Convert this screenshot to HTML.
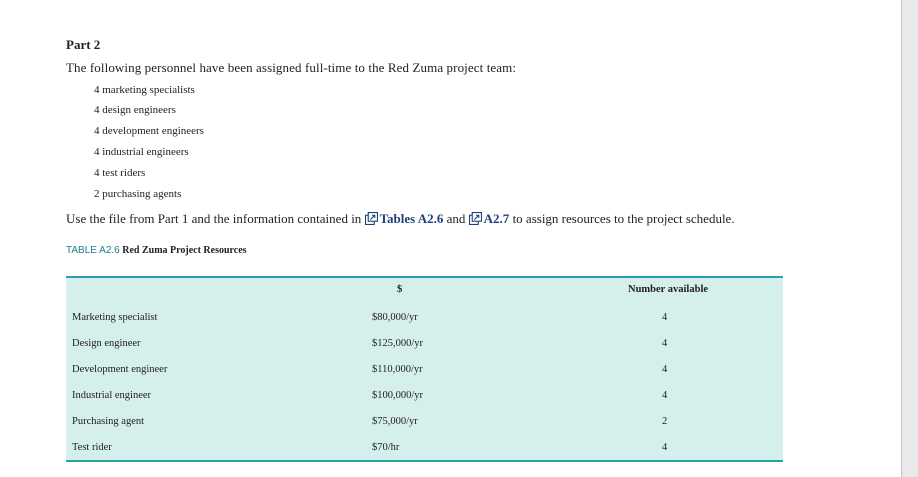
<!DOCTYPE html>
<html><head><style>
body{margin:0;width:918px;height:477px;background:#fff;position:relative;overflow:hidden;font-family:"Liberation Serif",serif;color:#222}
.a{position:absolute;white-space:nowrap;line-height:1}
.sb{position:absolute;left:901px;top:0;width:17px;height:477px;background:#e9e9e9;border-left:1px solid #c4c4c4}
.l{font-size:11px;left:94px}
.tb{position:absolute;left:66px;top:276px;width:717px;height:182px;background:#d5efec;border-top:2px solid #2aa0aa;border-bottom:2px solid #2aa0aa}
.r{font-size:10.5px}
.ic{display:inline-block;width:13px;height:13px;vertical-align:-2px;margin-right:2px}
b.k{color:#1d3f7a}
</style></head><body>
<div class="a" style="left:66px;top:38px;font-size:13px;font-weight:bold">Part 2</div>
<div class="a" style="left:66px;top:61px;font-size:13px;letter-spacing:0.1px">The following personnel have been assigned full-time to the Red Zuma project team:</div>
<div class="a l" style="top:85px">4 marketing specialists</div>
<div class="a l" style="top:105px">4 design engineers</div>
<div class="a l" style="top:126px">4 development engineers</div>
<div class="a l" style="top:147px">4 industrial engineers</div>
<div class="a l" style="top:168px">4 test riders</div>
<div class="a l" style="top:189px">2 purchasing agents</div>
<div class="a" style="left:66px;top:212px;font-size:13px">Use the file from Part 1 and the information contained in <svg class="ic" viewBox="0 0 12 12"><rect x="0.5" y="3" width="8" height="8.5" fill="none" stroke="#1d3f7a"/><rect x="3" y="0.5" width="8.5" height="8" fill="#fff" stroke="#1d3f7a"/><path d="M5 7L9 3M6.5 3H9V5.5" stroke="#1d3f7a" fill="none"/></svg><b class="k">Tables A2.6</b> and <svg class="ic" viewBox="0 0 12 12"><rect x="0.5" y="3" width="8" height="8.5" fill="none" stroke="#1d3f7a"/><rect x="3" y="0.5" width="8.5" height="8" fill="#fff" stroke="#1d3f7a"/><path d="M5 7L9 3M6.5 3H9V5.5" stroke="#1d3f7a" fill="none"/></svg><b class="k">A2.7</b> to assign resources to the project schedule.</div>
<div class="a" style="left:66px;top:246px;font-size:10px"><span style="font-family:'Liberation Sans',sans-serif;color:#1a7f8a">TABLE A2.6</span> <b>Red Zuma Project Resources</b></div>
<div class="tb"></div>
<div class="a r" style="left:397px;top:285px;font-weight:bold">$</div>
<div class="a r" style="left:628px;top:285px;font-weight:bold">Number available</div>
<div class="a r" style="left:72px;top:313px">Marketing specialist</div>
<div class="a r" style="left:72px;top:339px">Design engineer</div>
<div class="a r" style="left:72px;top:365px">Development engineer</div>
<div class="a r" style="left:72px;top:391px">Industrial engineer</div>
<div class="a r" style="left:72px;top:417px">Purchasing agent</div>
<div class="a r" style="left:72px;top:443px">Test rider</div>
<div class="a r" style="left:372px;top:313px">$80,000/yr</div>
<div class="a r" style="left:372px;top:339px">$125,000/yr</div>
<div class="a r" style="left:372px;top:365px">$110,000/yr</div>
<div class="a r" style="left:372px;top:391px">$100,000/yr</div>
<div class="a r" style="left:372px;top:417px">$75,000/yr</div>
<div class="a r" style="left:372px;top:443px">$70/hr</div>
<div class="a r" style="left:662px;top:313px">4</div>
<div class="a r" style="left:662px;top:339px">4</div>
<div class="a r" style="left:662px;top:365px">4</div>
<div class="a r" style="left:662px;top:391px">4</div>
<div class="a r" style="left:662px;top:417px">2</div>
<div class="a r" style="left:662px;top:443px">4</div>
<div class="sb"></div>
</body></html>
